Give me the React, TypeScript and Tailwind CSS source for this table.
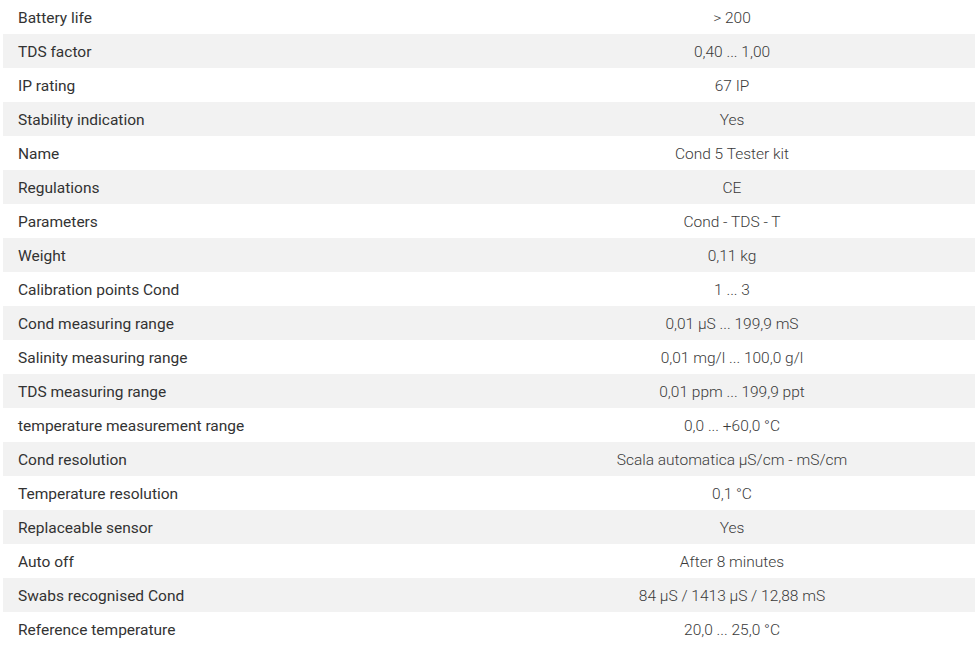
import React from "react";

type Spec = {
  label: string;
  value: string;
};

const specs: Spec[] = [
  { label: "Battery life", value: "> 200" },
  { label: "TDS factor", value: "0,40 ... 1,00" },
  { label: "IP rating", value: "67 IP" },
  { label: "Stability indication", value: "Yes" },
  { label: "Name", value: "Cond 5 Tester kit" },
  { label: "Regulations", value: "CE" },
  { label: "Parameters", value: "Cond - TDS - T" },
  { label: "Weight", value: "0,11 kg" },
  { label: "Calibration points Cond", value: "1 ... 3" },
  { label: "Cond measuring range", value: "0,01 µS ... 199,9 mS" },
  { label: "Salinity measuring range", value: "0,01 mg/l ... 100,0 g/l" },
  { label: "TDS measuring range", value: "0,01 ppm ... 199,9 ppt" },
  { label: "temperature measurement range", value: "0,0 ... +60,0 °C" },
  { label: "Cond resolution", value: "Scala automatica µS/cm - mS/cm" },
  { label: "Temperature resolution", value: "0,1 °C" },
  { label: "Replaceable sensor", value: "Yes" },
  { label: "Auto off", value: "After 8 minutes" },
  { label: "Swabs recognised Cond", value: "84 µS / 1413 µS / 12,88 mS" },
  { label: "Reference temperature", value: "20,0 ... 25,0 °C" },
];

export default function App() {
  return (
    <div className="min-h-screen bg-white px-[3px] font-['Roboto',sans-serif] text-[15.5px]">
      {/* spec table, rows alternate white / light gray */}
      <div className="w-[972px]">
        {specs.map((spec, index) => (
          <div
            key={spec.label}
            className={`grid h-[34px] grid-cols-2 items-center pt-[3px] ${
              index % 2 === 1 ? "bg-[#f2f2f2]" : "bg-white"
            }`}
          >
            <div className="pl-[15px] text-[#333333]">{spec.label}</div>
            <div className="text-center font-light text-[#3a3a3a]">
              {spec.value}
            </div>
          </div>
        ))}
      </div>
    </div>
  );
}
